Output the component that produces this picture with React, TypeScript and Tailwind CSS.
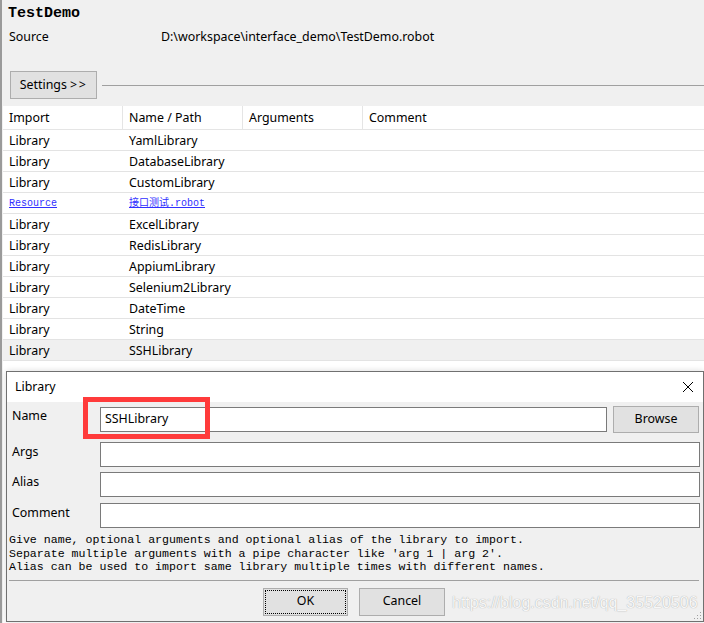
import React from "react";

const rows: { type: string; name: string; link?: boolean; selected?: boolean }[] = [
  { type: "Library", name: "YamlLibrary" },
  { type: "Library", name: "DatabaseLibrary" },
  { type: "Library", name: "CustomLibrary" },
  { type: "Resource", name: "接口测试.robot", link: true },
  { type: "Library", name: "ExcelLibrary" },
  { type: "Library", name: "RedisLibrary" },
  { type: "Library", name: "AppiumLibrary" },
  { type: "Library", name: "Selenium2Library" },
  { type: "Library", name: "DateTime" },
  { type: "Library", name: "String" },
  { type: "Library", name: "SSHLibrary", selected: true },
];

const ui = "font-['Noto_Sans','Noto_Sans_CJK_SC',sans-serif]";
const mono = "font-['Liberation_Mono','Noto_Sans_CJK_SC',monospace]";

export default function App() {
  return (
    <div
      className={`relative w-[704px] h-[623px] overflow-hidden bg-[#f0f0f0] border-l-2 border-[#9a9a9a] text-[12.4px] text-black ${ui}`}
    >
      {/* header */}
      <div className="flex flex-col pl-[6px]">
        <div className={`mt-[3px] h-[22px] leading-[22px] text-[15px] font-bold ${mono}`}>TestDemo</div>
        <div className="mt-[2px] h-[20px] leading-[20px] flex ml-px">
          <div className="w-[152px]">Source</div>
          <div>D:\workspace\interface_demo\TestDemo.robot</div>
        </div>
        <div className="mt-[24px] h-[28px] flex items-center ml-[2px]">
          <button className="h-[28px] w-[87px] border border-[#adadad] bg-[#e1e1e1] text-[12.4px] leading-none">
            Settings <span className="tracking-[1.5px]">&gt;&gt;</span>
          </button>
          <div className="flex-1 h-px bg-[#a0a0a0] ml-[5px]" />
        </div>
      </div>

      {/* table */}
      <div className="mt-[7px] ml-px h-[517px] bg-white">
        <div className="grid grid-cols-[120px_120px_120px_1fr] h-[24px] border-b border-[#e5e5e5]">
          {["Import", "Name / Path", "Arguments", "Comment"].map((h, i) => (
            <div
              key={h}
              className={`pl-[6px] leading-[23px] ${i < 3 ? "border-r border-[#e5e5e5]" : ""}`}
            >
              {h}
            </div>
          ))}
        </div>
        {rows.map((r, i) => (
          <div
            key={i}
            className={`grid grid-cols-[120px_120px_120px_1fr] h-[21px] border-b border-[#e3e3e3] ${
              r.selected ? "bg-[#f0f0f0]" : ""
            }`}
          >
            {r.link ? (
              <>
                <div className={`pl-[6px] pt-px leading-[20px] text-[10px] underline text-[#3030ff] ${mono}`}>{r.type}</div>
                <div className={`pl-[6px] pt-px leading-[20px] text-[10px] underline text-[#3030ff] ${mono}`}>{r.name}</div>
              </>
            ) : (
              <>
                <div className="pl-[6px] pt-px leading-[20px]">{r.type}</div>
                <div className="pl-[6px] pt-px leading-[20px]">{r.name}</div>
              </>
            )}
            <div />
            <div />
          </div>
        ))}
      </div>

      {/* dialog */}
      <div className="absolute left-[4px] top-[371px] w-[698px] h-[251px] border border-[#707070] bg-[#f0f0f0] flex flex-col shadow-[0_0_6px_rgba(0,0,0,0.15)]">
        <div className="h-[30px] bg-white flex items-center justify-between pl-[8px] pr-[8px]">
          <span>Library</span>
          <svg width="12" height="12" viewBox="0 0 12 12" className="mr-[1px]">
            <path d="M1 1 L11 11 M11 1 L1 11" stroke="#000" strokeWidth="1" />
          </svg>
        </div>
        <div className="flex flex-col pl-[5px] pr-[2px]">
          <div className="mt-[4px] flex items-start">
            <div className="w-[88px] mt-[2px] leading-[16px]">Name</div>
            <div className="mt-px h-[25px] w-[507px] border border-[#7a7a7a] bg-white flex items-center pl-[4px]">
              SSHLibrary
            </div>
            <button className="ml-[6px] h-[27px] w-[86px] border border-[#adadad] bg-[#e1e1e1] text-[12.4px]">
              Browse
            </button>
          </div>
          {[
            { l: "Args", mt: "mt-[9px]" },
            { l: "Alias", mt: "mt-[5px]" },
            { l: "Comment", mt: "mt-[6px]" },
          ].map((f) => (
            <div key={f.l} className={`${f.mt} flex items-start`}>
              <div className="w-[88px] mt-[2px] leading-[16px]">{f.l}</div>
              <div className="h-[25px] w-[600px] border border-[#7a7a7a] bg-white" />
            </div>
          ))}
        </div>
        <div className={`mt-[5px] pl-[2px] text-[11.6px] leading-[13.5px] whitespace-pre ${mono}`}>
          {"Give name, optional arguments and optional alias of the library to import.\nSeparate multiple arguments with a pipe character like 'arg 1 | arg 2'.\nAlias can be used to import same library multiple times with different names."}
        </div>
        <div className="mt-[6px] ml-[2px] mr-[4px] h-px bg-[#a0a0a0]" />
        <div className="mt-[7px] flex justify-center gap-[11px] pr-[2px]">
          <button className="h-[28px] w-[85px] border border-[#adadad] bg-[#e1e1e1] text-[12.4px] outline-1 outline-dotted outline-black outline-offset-[-3px]">
            OK
          </button>
          <button className="h-[28px] w-[86px] border border-[#adadad] bg-[#e1e1e1] text-[12.4px]">Cancel</button>
        </div>
        <div className="absolute left-[445px] top-[221px] text-[16px] leading-[20px] text-[#f7f7f7] font-['Liberation_Sans',sans-serif] [text-shadow:0_0_1px_#9a9a9a]">
          https://blog.csdn.net/qq_35520506
        </div>
        <svg className="absolute right-[1px] bottom-[1px]" width="8" height="8" viewBox="0 0 8 8">
          <rect x="6" y="0" width="1" height="1" fill="#a0a0a0" />
          <rect x="3" y="3" width="1" height="1" fill="#a0a0a0" />
          <rect x="6" y="3" width="1" height="1" fill="#a0a0a0" />
          <rect x="0" y="6" width="1" height="1" fill="#a0a0a0" />
          <rect x="3" y="6" width="1" height="1" fill="#a0a0a0" />
          <rect x="6" y="6" width="1" height="1" fill="#a0a0a0" />
        </svg>
      </div>

      {/* red highlight box */}
      <div className="absolute left-[81px] top-[397px] w-[127px] h-[42px] border-[5px] border-[#ff3b3b]" />
    </div>
  );
}
